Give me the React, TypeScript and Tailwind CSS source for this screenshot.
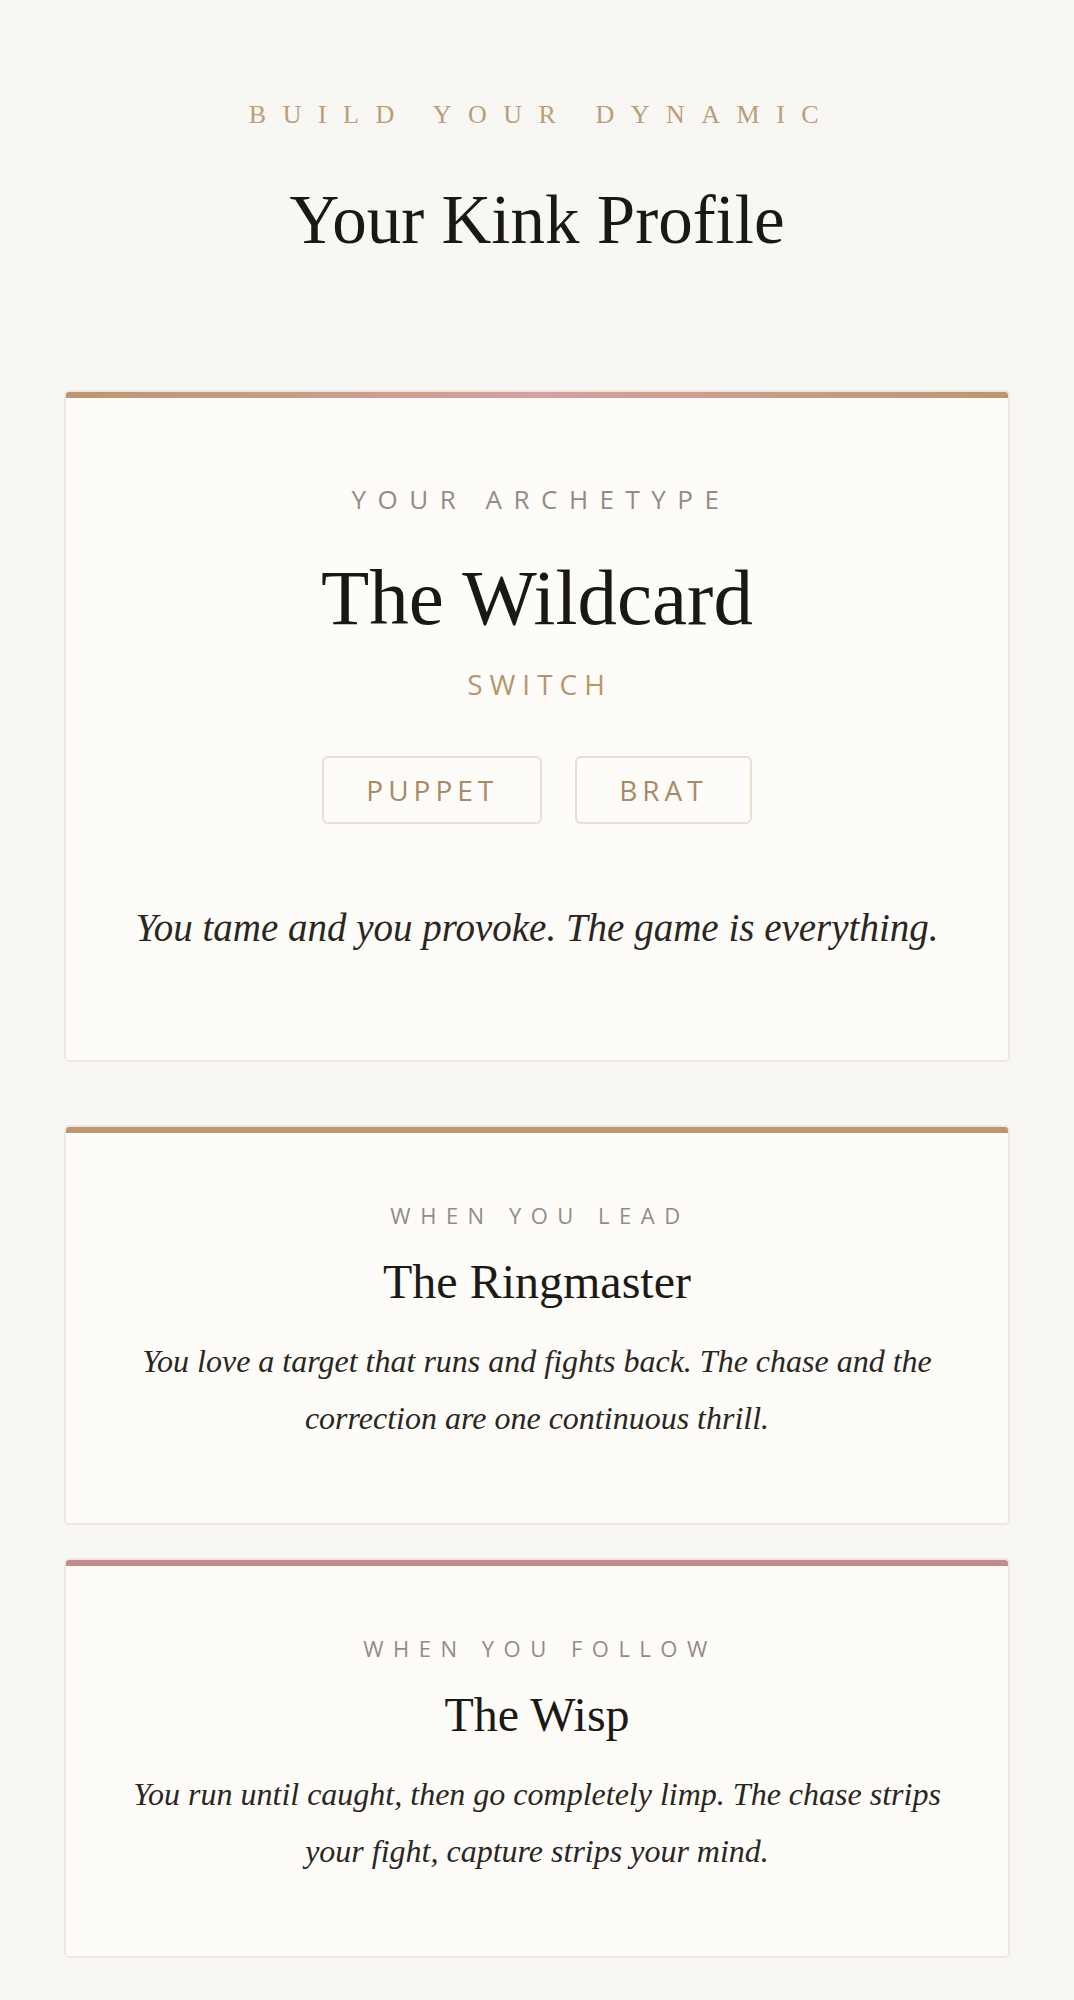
const serif = "font-['Liberation_Serif','Times_New_Roman',serif]";
const sans = "font-['Open_Sans','Noto_Sans',sans-serif]";

function RoleCard({
  label,
  title,
  text,
  bar,
}: {
  label: string;
  title: string;
  text: string;
  bar: string;
}) {
  return (
    <section className="overflow-hidden rounded-[5px] border-2 border-[#ede8e1] bg-[#fdfcf9]">
      <div className={`h-[6px] ${bar}`} />
      <div className="flex flex-col items-center px-[56px] pt-[71px] pb-[76px] text-center">
        <p className={`${sans} pl-[6px] text-[22px] leading-[22px] tracking-[9.5px] text-[#948c84]`}>
          {label}
        </p>
        <h2 className={`${serif} mt-[32px] text-[48px] leading-[48px] text-[#1c1a17]`}>{title}</h2>
        <p className={`${serif} mt-[27px] text-[32px] italic leading-[57px] text-[#2a2723]`}>{text}</p>
      </div>
    </section>
  );
}

export default function App() {
  return (
    <div className="min-h-screen bg-[#f9f7f3] px-16 pt-[102px] pb-10">
      <header className="flex flex-col items-center text-center">
        <p className={`${serif} pl-[10px] text-[26px] leading-[26px] tracking-[16.5px] text-[#bb9d78]`}>
          BUILD YOUR DYNAMIC
        </p>
        <h1 className={`${serif} mt-[58px] text-[69px] leading-[68px] text-[#1a1816]`}>Your Kink Profile</h1>
      </header>

      <div className="mt-[136px] flex flex-col gap-[33px]">
        <section className="mb-[30px] overflow-hidden rounded-[5px] border-2 border-[#ede8e1] bg-[#fdfcf9]">
          <div className="h-[6px] bg-linear-to-r from-[#bd9670] via-[#d5a1a1] to-[#bd9670]" />
          <div className="flex flex-col items-center px-[56px] pt-[88px] pb-[113px] text-center">
            <p className={`${sans} pl-[8px] text-[26px] leading-[26px] tracking-[11.5px] text-[#948c84]`}>
              YOUR ARCHETYPE
            </p>
            <h2 className={`${serif} mt-[46px] text-[79px] leading-[79px] text-[#1a1816]`}>The Wildcard</h2>
            <p className={`${sans} mt-[33px] pl-[5px] text-[28px] font-medium leading-[28px] tracking-[7px] text-[#b8966c]`}>
              SWITCH
            </p>
            <div className="mt-[58px] flex gap-[33px]">
              {["PUPPET", "BRAT"].map((tag) => (
                <span
                  key={tag}
                  className={`${sans} flex h-[68px] items-center rounded-[6px] border-2 border-[#e8dfd1] px-[42px] text-[28px] font-medium tracking-[5px] text-[#a98a66]`}
                >
                  {tag}
                </span>
              ))}
            </div>
            <p className={`${serif} mt-[85px] text-[39px] italic leading-[38px] text-[#2a2723]`}>
              You tame and you provoke. The game is everything.
            </p>
          </div>
        </section>

        <RoleCard
          label="WHEN YOU LEAD"
          title="The Ringmaster"
          text="You love a target that runs and fights back. The chase and the correction are one continuous thrill."
          bar="bg-[#bc976f]"
        />
        <RoleCard
          label="WHEN YOU FOLLOW"
          title="The Wisp"
          text="You run until caught, then go completely limp. The chase strips your fight, capture strips your mind."
          bar="bg-[#c38a8f]"
        />
      </div>
    </div>
  );
}
